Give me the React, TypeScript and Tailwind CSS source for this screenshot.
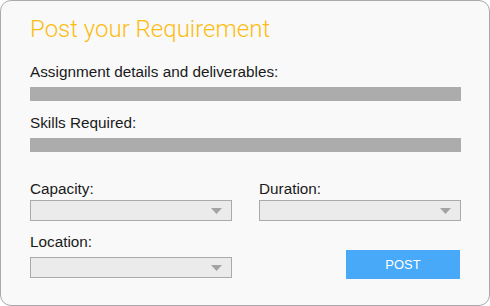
export default function App() {
  const font = { fontFamily: '"Liberation Sans", Arial, sans-serif' };

  const Select = () => (
    <div className="flex h-[21px] w-[202px] items-center justify-end border border-[#aaaaaa] bg-[#ebebeb] pr-[9px]">
      <svg width="11" height="6" viewBox="0 0 11 6">
        <polygon points="0,0 11,0 5.5,6" fill="#a3a3a3" />
      </svg>
    </div>
  );

  return (
    <div className="h-[306px] w-[490px] bg-white" style={font}>
      <div className="flex h-[306px] w-[490px] flex-col rounded-[11px] border border-[#aaaaaa] bg-[#f9f9f9] pl-[29px] pr-[28px]">
        <h1 className="mt-[14px] h-[28px] font-['Roboto',sans-serif] text-[24px] font-light leading-[28px] text-[#fcbd12]">
          Post your Requirement
        </h1>

        <label className="mt-[20px] h-[17px] text-[15.3px] leading-[17px] text-[#1a1a1a]">
          Assignment details and deliverables:
        </label>
        <div className="mt-[7px] h-[14px] w-full bg-[#acacac]" />

        <label className="mt-[13px] h-[17px] text-[15.3px] leading-[17px] text-[#1a1a1a]">
          Skills Required:
        </label>
        <div className="mt-[7px] h-[14px] w-full bg-[#acacac]" />

        <div className="mt-[28px] grid grid-cols-[202px_202px] justify-between">
          <div className="flex flex-col">
            <span className="h-[17px] text-[15.3px] leading-[17px] text-[#1a1a1a]">Capacity:</span>
            <div className="mt-[3px]">
              <Select />
            </div>
          </div>
          <div className="flex flex-col">
            <span className="h-[17px] text-[15.3px] leading-[17px] text-[#1a1a1a]">Duration:</span>
            <div className="mt-[3px]">
              <Select />
            </div>
          </div>

          <div className="mt-[12px] flex flex-col">
            <span className="h-[17px] text-[15.3px] leading-[17px] text-[#1a1a1a]">Location:</span>
            <div className="mt-[7px]">
              <Select />
            </div>
          </div>
          <div className="mt-[29px] flex justify-end pr-[1px]">
            <button className="h-[29px] w-[114px] bg-[#48a9f8] text-[13px] text-white">
              POST
            </button>
          </div>
        </div>
      </div>
    </div>
  );
}
